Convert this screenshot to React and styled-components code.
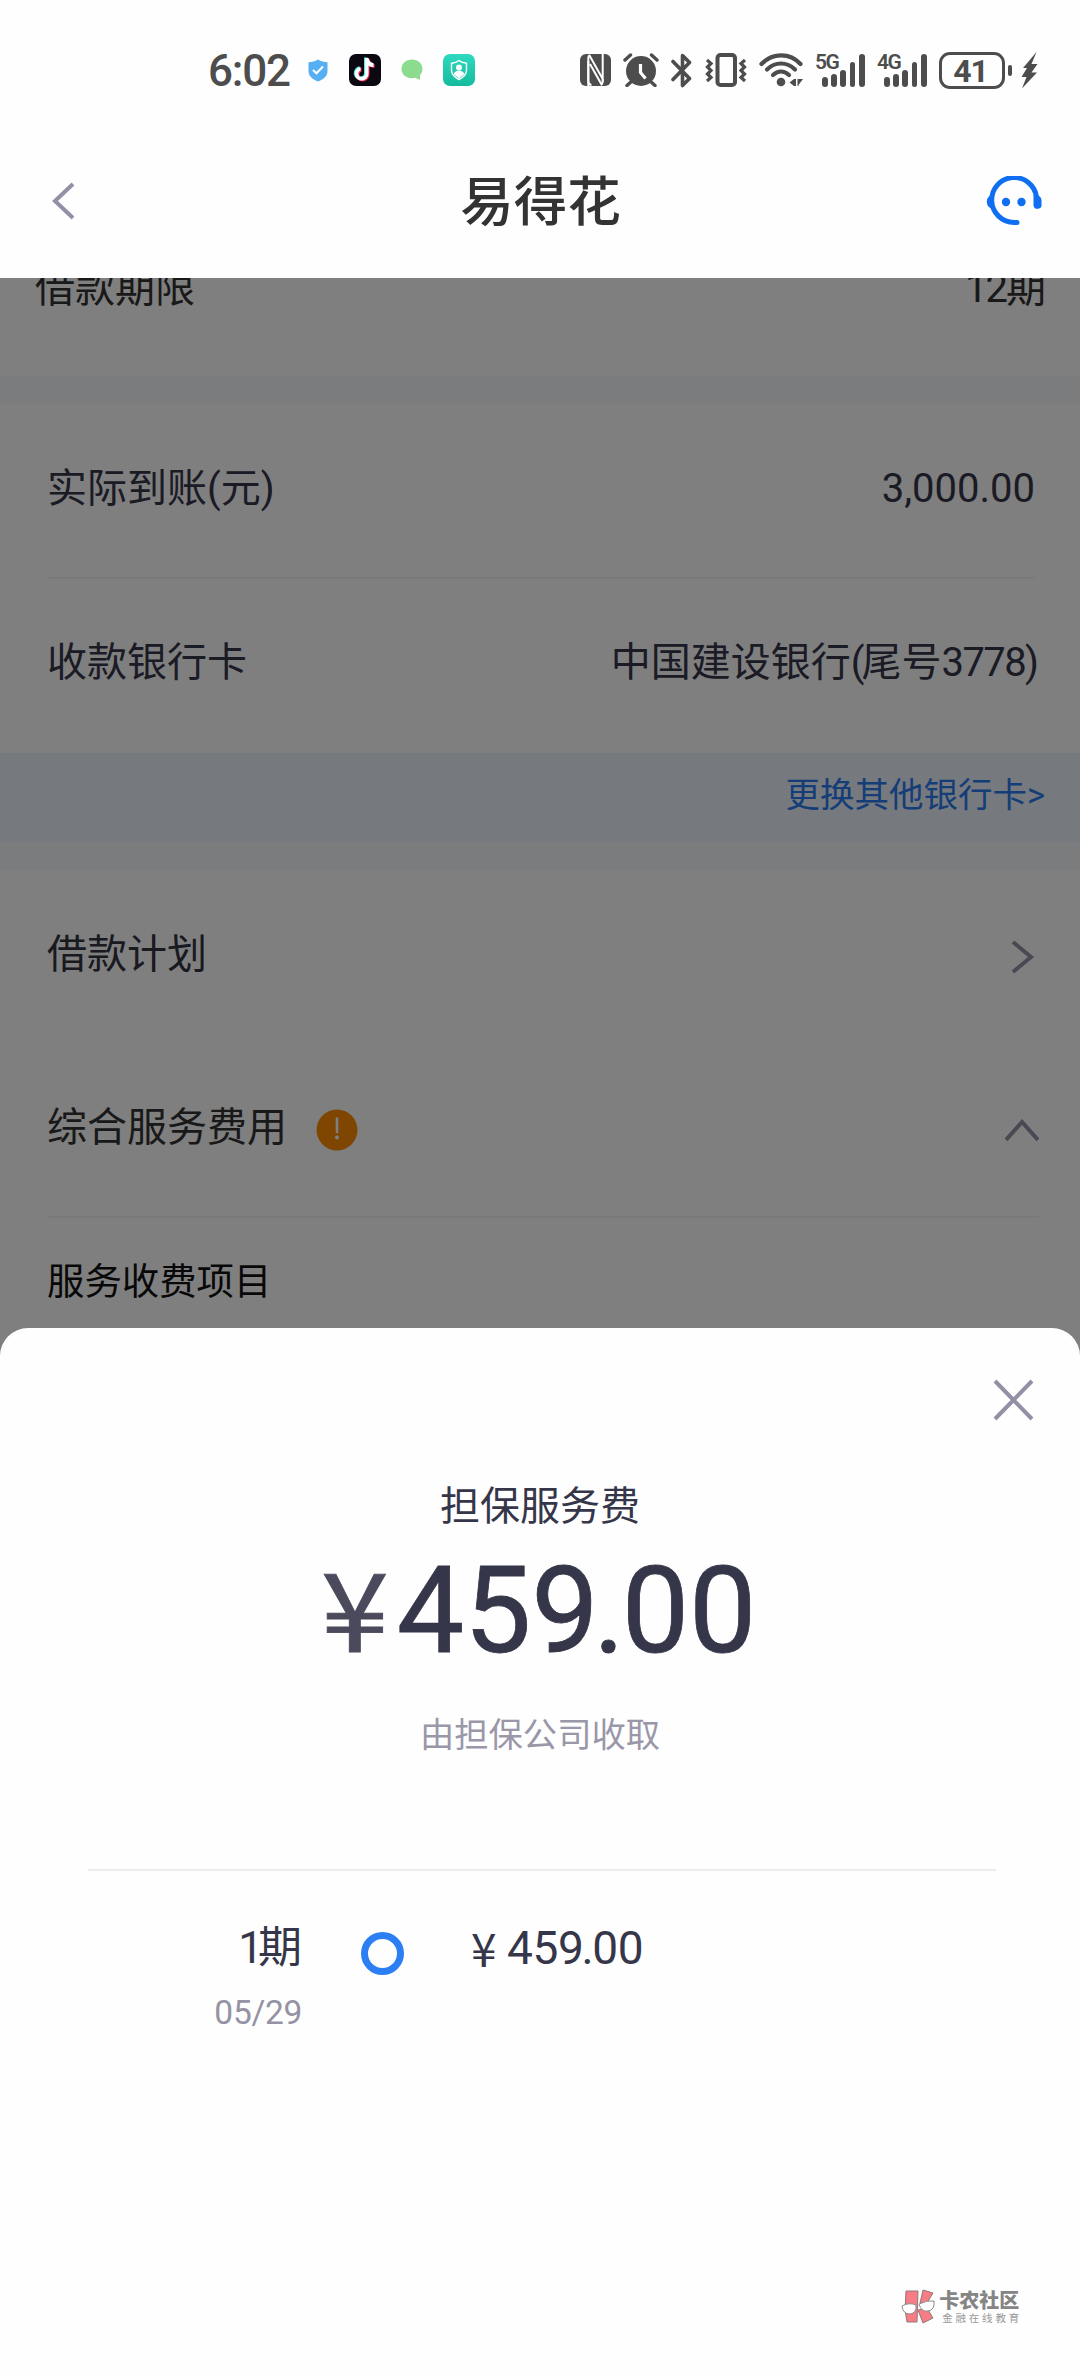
import React from 'react';
import styled, { createGlobalStyle } from 'styled-components';

const Global = createGlobalStyle`
  * { box-sizing: border-box; }
  html, body { margin: 0; padding: 0; background: #fefefe; }
  body { font-family: Roboto, "Noto Sans CJK SC", sans-serif; color: #36364a; }
  svg { display: block; flex: none; }
`;

const Screen = styled.div`
  width: 1080px;
  height: 2376px;
  display: flex;
  flex-direction: column;
  overflow: hidden;
  position: relative;
  background: #fefefe;
`;

const StatusBar = styled.div`
  height: 130px;
  padding: 52px 42px 42px 208px;
  display: flex;
  align-items: center;
  justify-content: space-between;
  flex: none;
  color: #4d4d4d;
`;

const StatusGroup = styled.div`
  display: flex;
  align-items: center;
`;

const Clock = styled.span`
  width: 100px;
  font-size: 44px;
  line-height: 36px;
  font-weight: 500;
  letter-spacing: -1.2px;
  padding-top: 2px;
`;

const Gap = styled.span`
  width: ${(p) => p.$w}px;
`;

const Signal = styled.div`
  display: flex;
  align-items: flex-start;
  height: 36px;
  width: 50px;
`;

const SignalName = styled.span`
  width: 7px;
  font-size: 21px;
  line-height: 21px;
  font-weight: 600;
  letter-spacing: -1.4px;
  white-space: nowrap;
`;

const Bars = styled.div`
  display: flex;
  align-items: flex-end;
  gap: 3.4px;
  height: 35px;
`;

const Bar = styled.span`
  width: 5.8px;
  height: ${(p) => p.$h}px;
  border-radius: 3px;
  background: #4d4d4d;
`;

const Battery = styled.div`
  width: 66px;
  height: 37px;
  border: 3px solid #4d4d4d;
  border-radius: 11px;
  font-size: 32px;
  line-height: 32px;
  font-weight: 700;
  letter-spacing: -1px;
  text-align: center;
  padding-right: 3px;
`;

const BatteryNub = styled.span`
  width: 4px;
  height: 11px;
  margin: 0 9px 0 3px;
  border-radius: 2px;
  background: #4d4d4d;
`;

const Header = styled.header`
  height: 148px;
  padding: 0 38px 7px 51px;
  display: flex;
  align-items: center;
  justify-content: space-between;
  flex: none;
`;

const HeaderSide = styled.div`
  width: 60px;
  display: flex;
  justify-content: ${(p) => p.$side};
`;

const Title = styled.h1`
  margin: 0 0 0 -12px;
  padding-top: 5px;
  font-size: 53.5px;
  line-height: 70px;
  font-weight: 500;
  color: #333;
`;

const Body = styled.main`
  flex: 1;
  min-height: 0;
  overflow: hidden;
  position: relative;
  background: #fff;
`;

const Row = styled.div`
  height: ${(p) => p.$h}px;
  margin: 0 ${(p) => p.$right || 45}px 0 47px;
  padding-bottom: ${(p) => p.$lift || 0}px;
  border-bottom: ${(p) => (p.$line ? '2px solid #f2f2f4' : 'none')};
  display: flex;
  align-items: center;
  justify-content: space-between;
  font-size: 40px;
  line-height: 60px;
  white-space: nowrap;
`;

const TermRow = styled(Row)`
  margin: -19px 34px 0 35px;
  align-items: flex-start;
  color: #333;
`;

const FeeRow = styled(Row)`
  font-size: 37.4px;
  color: #111;
`;

const Label = styled.span`
  display: flex;
  align-items: center;
  gap: 29px;
  color: ${(p) => p.$color || 'inherit'};
`;

const Tight = styled.span`
  letter-spacing: ${(p) => p.$by}px;
`;

const Drop = styled.span`
  padding-top: ${(p) => p.$y}px;
`;

const Band = styled.div`
  height: 28px;
  background: #f7f8fa;
`;

const ChangeCard = styled.div`
  height: 89px;
  padding: 0 35px 11px 0;
  background: #ecf2fb;
  color: #2a7bf0;
  display: flex;
  align-items: center;
  justify-content: flex-end;
  font-size: 34.5px;
`;

const Layer = styled.div`
  position: absolute;
  inset: 278px 0 0;
  display: flex;
  flex-direction: column;
  justify-content: flex-end;
  background: rgba(0, 0, 0, 0.5);
`;

const Sheet = styled.section`
  height: 1048px;
  display: flex;
  flex-direction: column;
  align-items: center;
  background: #fefefe;
  border-radius: 28px 28px 0 0;
`;

const CloseBar = styled.div`
  width: 100%;
  height: 149px;
  padding: 50px 45px 0 0;
  display: flex;
  justify-content: flex-end;
`;

const SheetTitle = styled.h2`
  margin: 0;
  font-size: 40px;
  line-height: 60px;
  font-weight: 400;
`;

const Amount = styled.div`
  height: 140px;
  margin: 4px 0 -4px -3px;
  display: flex;
  align-items: center;
  font-size: 120px;
  line-height: 140px;
  letter-spacing: -0.2px;
  -webkit-text-stroke: 0.8px currentColor;
`;

const BigYen = styled.span`
  width: 76px;
  margin-bottom: 13px;
  font-family: "Noto Sans CJK SC", sans-serif;
  font-size: 109px;
  line-height: 1;
  color: #4a4a5c;
  transform: scaleX(1.12);
  transform-origin: left;
`;

const SmallYen = styled.span`
  width: 36px;
  margin-bottom: 3px;
  font-family: "Noto Sans CJK SC", sans-serif;
  font-size: 46px;
  line-height: 1;
`;

const Dot = styled.span`
  margin: 0 -0.025em 0 -0.045em;
`;

const Note = styled.p`
  margin: 32px 0 0;
  height: 160px;
  font-size: 34.3px;
  line-height: 52px;
  color: #9997a8;
`;

const Rule = styled.div`
  width: 908px;
  height: 2px;
  margin-left: 4px;
  background: #ededed;
`;

const Plan = styled.div`
  width: 100%;
  padding: 47px 0 0 142px;
  display: flex;
  align-items: flex-start;
`;

const Period = styled.div`
  width: 160px;
  display: flex;
  flex-direction: column;
  align-items: flex-end;
  font-size: 44px;
  line-height: 60px;
`;

const DateText = styled.span`
  margin-top: 5px;
  font-size: 33.5px;
  line-height: 60px;
  letter-spacing: -0.3px;
  color: #9492a3;
`;

const Ring = styled.span`
  width: 43px;
  height: 43px;
  margin: 14px 67px 0 59px;
  border: 7px solid #2b7ff3;
  border-radius: 50%;
`;

const PlanAmount = styled.span`
  display: flex;
  align-items: center;
  font-size: 46px;
  line-height: 60px;
  letter-spacing: -0.3px;
`;

const Watermark = styled.div`
  margin: auto 58px 51px auto;
  display: flex;
  align-items: center;
  gap: 3px;
`;

const Brand = styled.div`
  display: flex;
  flex-direction: column;
  font-size: 20px;
  line-height: 22px;
  font-weight: 900;
  color: #858585;
`;

const Slogan = styled.span`
  padding-left: 3px;
  font-size: 10.5px;
  line-height: 13px;
  font-weight: 400;
  letter-spacing: 2.8px;
  color: #999;
`;

const INK = '#4d4d4d';

const ShieldIcon = () => (
  <svg width="20" height="23" viewBox="0 0 20 23">
    <path d="M10 0.5C13 2.5 16 3 19.5 3.3V12C19.5 17.5 15 20.5 10 22.5C5 20.5 .5 17.500 .5 12V3.300C4 3 7 2.500 10 .5Z" fill="#56aff2" />
    <path d="M5 11L8.500 14.300L15 7.500" fill="none" stroke="#fff" strokeWidth="2" />
  </svg>
);

const NOTE = 'M16 4H19.500C19.900 7 21.600 8.800 24.500 9.200V13C22.600 13 21 12.400 19.500 11.400V19.800A6.900 6.900 0 1 1 11.500 12.900V16.600A3.300 3.300 0 1 0 16 19.800Z';

const MusicIcon = () => (
  <svg width="32" height="32" viewBox="0 0 32 32">
    <rect width="32" height="32" rx="7" fill="#0b0812" />
    <path d={NOTE} fill="#3ff0e6" transform="translate(-1 -.6)" />
    <path d={NOTE} fill="#f8365c" transform="translate(1 .8)" />
    <path d={NOTE} fill="#fff" />
  </svg>
);

const BubbleIcon = () => (
  <svg width="22" height="22" viewBox="0 0 22 22">
    <path d="M11 .5C17 .5 21.500 4.600 21.500 10C21.500 12.500 20.500 14.500 19 16V21L14.500 18.800C7 20.500 .5 16.500 .5 10C.5 4.600 5 .5 11 .5Z" fill="#8bdc8f" />
  </svg>
);

const GuardIcon = () => (
  <svg width="32" height="32" viewBox="0 0 32 32">
    <defs>
      <linearGradient id="guard" x1="0" y1="0" x2="0" y2="1">
        <stop offset="0" stopColor="#2ed9c0" />
        <stop offset="1" stopColor="#16bb9c" />
      </linearGradient>
    </defs>
    <rect width="32" height="32" rx="7" fill="url(#guard)" />
    <path d="M16 6.500C18.500 8.500 20.500 9 23.500 9.300V16C23.500 20.500 20 23.500 16 25.500C12 23.500 8.500 20.500 8.500 16V9.300C11.500 9 13.500 8.500 16 6.500Z" fill="none" stroke="#fff" strokeWidth="1.400" />
    <circle cx="16" cy="13.500" r="3" fill="#fff" />
    <path d="M10.500 20C12 17 14 16.500 16 16.500S20 17 21.500 20L16 24.500Z" fill="#fff" />
  </svg>
);

const NfcIcon = () => (
  <svg width="31" height="32" viewBox="0 0 31 32">
    <rect width="31" height="32" rx="6" fill={INK} />
    <path d="M8.300 32V5Q8.300 1.500 9.500 1.500L22.700 25V0" fill="none" stroke="#fefefe" strokeWidth="2" />
    <path d="M8.300 7V27Q8.300 30.500 11.500 31M22.700 25Q22.700 30 21.500 30.500L10 10" fill="none" stroke="#fefefe" strokeWidth="2" />
  </svg>
);

const AlarmIcon = () => (
  <svg width="36" height="34" viewBox="0 0 36 34">
    <circle cx="18" cy="18" r="15" fill={INK} />
    <path d="M2 7L7.500 2M34 7L28.500 2M4 32.500L9 28M32 32.500L27 28" stroke={INK} strokeWidth="3.400" strokeLinecap="round" />
    <path d="M17.500 11V19.500L22.500 25.500" stroke="#fefefe" strokeWidth="3.200" fill="none" />
  </svg>
);

const BluetoothIcon = () => (
  <svg width="22" height="35" viewBox="0 0 22 35">
    <path d="M2 8.500L18.500 25.500L11.500 32.500V2.500L18.500 9.500L2 26.500" fill="none" stroke={INK} strokeWidth="3.600" strokeLinecap="round" strokeLinejoin="round" />
  </svg>
);

const VibrateIcon = () => (
  <svg width="42" height="34" viewBox="0 0 42 34">
    <rect x="12.500" y="2" width="17.500" height="30" rx="3" fill="none" stroke={INK} strokeWidth="4" />
    <path d="M2 7L6 10.500L2.500 14L6 17.500L2.500 21L6 24.500L2 28M40 7L36 10.500L39.500 14L36 17.500L39.500 21L36 24.500L40 28" fill="none" stroke={INK} strokeWidth="3.200" />
  </svg>
);

const WifiIcon = () => (
  <svg width="45" height="34" viewBox="0 0 45 34">
    <g fill="none" stroke={INK} strokeWidth="4.200" strokeLinecap="round">
      <path d="M2.500 11C13.500 -.5 31 -.5 41.500 11" />
      <path d="M8 16.500C16 8.500 28 8.500 36 16.500" />
      <path d="M14 22C19 17.500 25 17.500 30 22" />
    </g>
    <circle cx="22" cy="29" r="4.300" fill={INK} />
    <path d="M35 26V33L30.500 29.500Z M35 26H37V33H35Z M38.500 26H44L39.500 32V33H38.500Z" fill={INK} />
  </svg>
);

const BoltIcon = () => (
  <svg width="17" height="37" viewBox="0 0 17 37">
    <path d="M15.500 0L2 16H6L.5 25H5.500L1 36.500L16 20.500H10.500L16.500 12H10.500Z" fill={INK} />
  </svg>
);

const ServiceIcon = () => (
  <svg width="56" height="50" viewBox="0 0 56 50">
    <path d="M50.500 21A22.500 22.500 0 1 0 28 46.500H31" fill="none" stroke="#0f6ff0" strokeWidth="5" strokeLinecap="round" />
    <path d="M8 18.500A7 7 0 0 0 8 33Z" fill="#0f6ff0" />
    <path d="M47.500 19H50A5.500 5.500 0 0 1 55.500 24V28A4 4 0 0 1 47.500 29.500Z" fill="#0f6ff0" />
    <circle cx="20" cy="26" r="4.200" fill="#0f6ff0" />
    <circle cx="35.500" cy="26" r="4.200" fill="#0f6ff0" />
  </svg>
);

const Stroke = ({ w, h, d, color = '#9290a6', width = 4 }) => (
  <svg width={w} height={h} viewBox={`0 0 ${w} ${h}`}>
    <path d={d} fill="none" stroke={color} strokeWidth={width} />
  </svg>
);

const AlertIcon = () => (
  <svg width="42" height="42" viewBox="0 0 42 42">
    <circle cx="21" cy="21" r="20.500" fill="#ff8d04" />
    <path d="M21 9.500V23" stroke="#fff" strokeWidth="2.600" strokeLinecap="round" />
    <circle cx="21" cy="28.500" r="2" fill="#fff" />
  </svg>
);

const WatermarkLogo = () => (
  <svg width="35" height="36" viewBox="0 0 35 36">
    <g fill="#f77c83" stroke="#8d7a7c" strokeWidth="1">
      <path d="M5 2H17L16 33H6L4 21Z" />
      <path d="M19 14L22 1L32 4L26 14Z" />
      <path d="M17 21L26 19L32 29L22 34Z" />
    </g>
    <g fill="#fff" stroke="#8d8d8d" strokeWidth="1">
      <path d="M1 17Q8 13 15 16Q16 24 9 25Q2 25 1 17Z" />
      <path d="M18 15Q26 11 33 12Q34 21 27 22Q20 23 18 15Z" />
    </g>
  </svg>
);

const BARS = [10, 13.500, 17.500, 25, 33.500];

const SignalMeter = ({ name }) => (
  <Signal>
    <SignalName>{name}</SignalName>
    <Bars>
      {BARS.map((h) => (
        <Bar key={h} $h={h} />
      ))}
    </Bars>
  </Signal>
);

const Digits = ({ value }) => {
  const [whole, cents] = value.split('.');
  return (
    <span>
      {whole}
      <Dot>.</Dot>
      {cents}
    </span>
  );
};

const FeeSheet = () => (
  <Layer>
    <Sheet>
      <CloseBar>
        <Stroke w={43} h={44} d="M3 3L40 41M40 3L3 41" />
      </CloseBar>
      <SheetTitle>担保服务费</SheetTitle>
      <Amount>
        <BigYen>¥</BigYen>
        <Digits value="459.00" />
      </Amount>
      <Note>由担保公司收取</Note>
      <Rule />
      <Plan>
        <Period>
          <span>
            <Tight $by={-5}>1</Tight>期
          </span>
          <DateText>05/29</DateText>
        </Period>
        <Ring />
        <PlanAmount>
          <SmallYen>¥</SmallYen>
          <Digits value="459.00" />
        </PlanAmount>
      </Plan>
      <Watermark>
        <WatermarkLogo />
        <Brand>
          卡农社区
          <Slogan>金融在线教育</Slogan>
        </Brand>
      </Watermark>
    </Sheet>
  </Layer>
);

export default function App() {
  return (
    <>
      <Global />
      <Screen>
        <StatusBar>
          <StatusGroup>
            <Clock>6:02</Clock>
            <ShieldIcon />
            <Gap $w={21} />
            <MusicIcon />
            <Gap $w={20} />
            <BubbleIcon />
            <Gap $w={20} />
            <GuardIcon />
          </StatusGroup>
          <StatusGroup>
            <NfcIcon />
            <Gap $w={12} />
            <AlarmIcon />
            <Gap $w={12} />
            <BluetoothIcon />
            <Gap $w={12} />
            <VibrateIcon />
            <Gap $w={12} />
            <WifiIcon />
            <Gap $w={11} />
            <SignalMeter name="5G" />
            <Gap $w={12} />
            <SignalMeter name="4G" />
            <Gap $w={12} />
            <Battery>41</Battery>
            <BatteryNub />
            <BoltIcon />
          </StatusGroup>
        </StatusBar>
        <Header>
          <HeaderSide $side="flex-start">
            <Stroke w={24} h={38} d="M22 2L4 19L22 36" />
          </HeaderSide>
          <Title>易得花</Title>
          <HeaderSide $side="flex-end">
            <ServiceIcon />
          </HeaderSide>
        </Header>
        <Body>
          <TermRow $h={117}>
            <Label>借款期限</Label>
            <span>
              <Tight $by={-2}>12</Tight>期
            </span>
          </TermRow>
          <Band />
          <Row $h={175} $lift={3} $line>
            <Label>实际到账(元)</Label>
            <span>3,000.00</span>
          </Row>
          <Row $h={174} $lift={7} $right={41}>
            <Label>收款银行卡</Label>
            <span>
              中国建设银行<Tight $by={-3}>(</Tight>尾号<Tight $by={-1.6}>3778</Tight>)
            </span>
          </Row>
          <ChangeCard>更换其他银行卡&gt;</ChangeCard>
          <Band />
          <Row $h={169}>
            <Label $color="#333340">借款计划</Label>
            <Drop $y={5}>
              <Stroke w={24} h={34} d="M2 2L20 17L2 32" />
            </Drop>
          </Row>
          <Row $h={179} $line $right={41}>
            <Label $color="#333">
              综合服务费用
              <Drop $y={4}>
                <AlertIcon />
              </Drop>
            </Label>
            <Drop $y={4}>
              <Stroke w={34} h={24} d="M1 22L17 4L33 22" />
            </Drop>
          </Row>
          <FeeRow $h={128}>服务收费项目</FeeRow>
        </Body>
        <FeeSheet />
      </Screen>
    </>
  );
}
